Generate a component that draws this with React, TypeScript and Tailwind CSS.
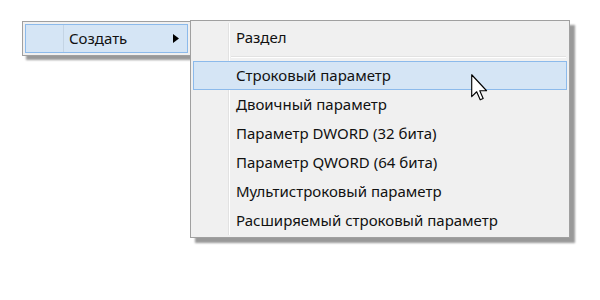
import React from 'react';

const items = [
  'Строковый параметр',
  'Двоичный параметр',
  'Параметр DWORD (32 бита)',
  'Параметр QWORD (64 бита)',
  'Мультистроковый параметр',
  'Расширяемый строковый параметр',
];

const font = { fontFamily: '"Noto Sans", "Open Sans", sans-serif' };

export default function App() {
  return (
    <div className="relative w-[600px] h-[300px] bg-white text-[15px] text-[#111]" style={font}>
      <div className="flex items-start pt-[20px] pl-[22px]">
        {/* parent menu */}
        <div className="mt-[1px] w-[169px] border border-[#a0a0a0] bg-[#f0f0f0] p-[2px] shadow-[4px_4px_2px_rgba(0,0,0,0.4)]">
          <div className="flex h-[29px] items-center border border-[#8cbaeb] bg-[#d5e5f5]">
            <div className="w-[38px] h-full border-r border-[#c4d4e4]" />
            <span className="ml-[5px] flex-1">Создать</span>
            <svg width="6" height="9" viewBox="0 0 6 9" className="mr-[8px]">
              <path d="M0 0 L6 4.5 L0 9 Z" fill="#000" />
            </svg>
          </div>
        </div>

        {/* submenu */}
        <div className="relative -ml-[1px] w-[380px] border border-[#a0a0a0] bg-[#f0f0f0] p-[2px] shadow-[5px_5px_2px_rgba(0,0,0,0.4)]">
          <div className="absolute left-[37px] top-[2px] bottom-[2px] w-[2px] border-l border-[#e2e2e2] border-r border-r-white" />
          <div className="relative flex h-[29px] items-center pl-[43px]">Раздел</div>
          <div className="relative h-[9px] flex items-center pl-[38px] pr-[1px]">
            <div className="w-full h-[2px] border-t border-[#e2e2e2] border-b border-b-white" />
          </div>
          {items.map((t, i) => (
            <div
              key={t}
              className={
                i === 0
                  ? 'relative flex h-[29px] items-center pl-[42px] border border-[#8cbaeb] bg-[#d5e5f5]'
                  : 'relative flex h-[29px] items-center pl-[43px]'
              }
            >
              {t}
            </div>
          ))}
        </div>
      </div>

      {/* mouse cursor */}
      <svg className="absolute left-[471px] top-[74px]" width="17" height="27" viewBox="0 0 12 19">
        <path
          d="M0.5 0.5 L0.5 16 L4 12.5 L6.5 18.2 L8.6 17.3 L6.2 11.8 L11 11.8 Z"
          fill="#fff"
          stroke="#000"
          strokeWidth="0.8"
          strokeLinejoin="round"
        />
      </svg>
    </div>
  );
}
